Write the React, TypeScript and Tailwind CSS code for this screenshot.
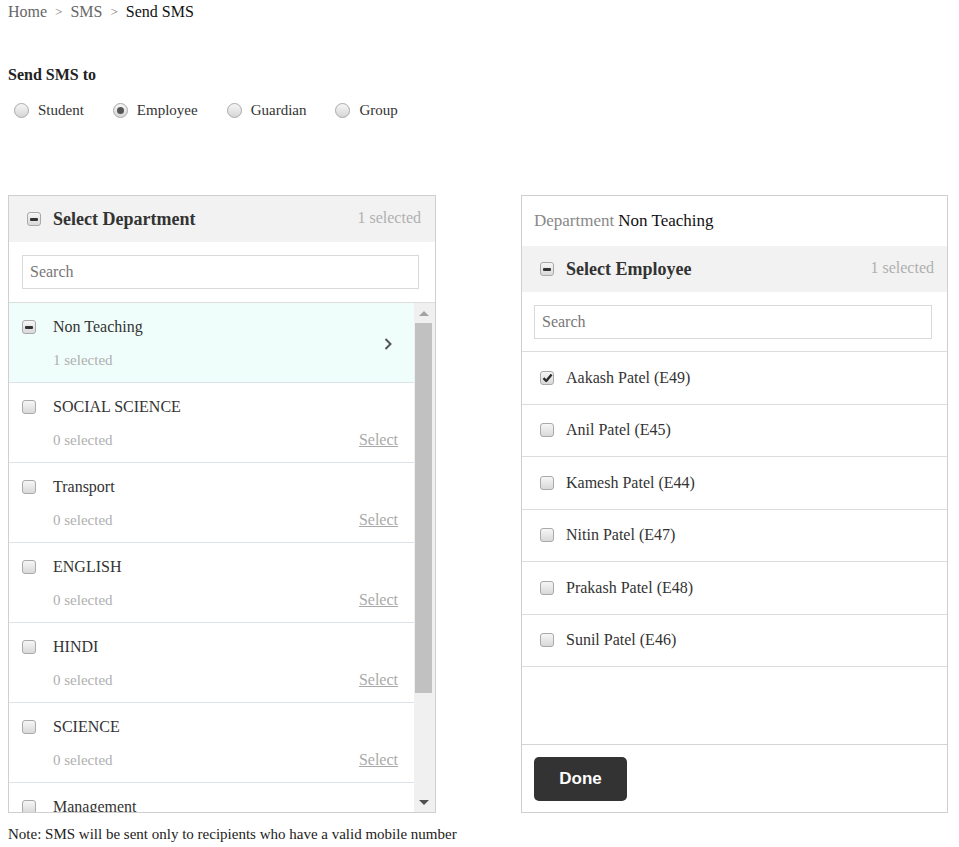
import React from 'react';

const departments = [
  { name: 'Non Teaching', count: 1, active: true },
  { name: 'SOCIAL SCIENCE', count: 0 },
  { name: 'Transport', count: 0 },
  { name: 'ENGLISH', count: 0 },
  { name: 'HINDI', count: 0 },
  { name: 'SCIENCE', count: 0 },
  { name: 'Management', count: 0 },
];

const employees = [
  { name: 'Aakash Patel (E49)', checked: true },
  { name: 'Anil Patel (E45)' },
  { name: 'Kamesh Patel (E44)' },
  { name: 'Nitin Patel (E47)' },
  { name: 'Prakash Patel (E48)' },
  { name: 'Sunil Patel (E46)' },
];

function Box({ mode }: { mode?: 'minus' | 'check' }) {
  return (
    <span className="flex h-[14px] w-[14px] shrink-0 items-center justify-center rounded-[3px] border border-[#a9a9a9] bg-linear-to-b from-[#f6f6f6] to-[#d9d9d9]">
      {mode === 'minus' && <span className="h-[3px] w-[8px] rounded-[1px] bg-[#333]" />}
      {mode === 'check' && (
        <svg width="11" height="10" viewBox="0 0 11 10">
          <path d="M1.5 5.2 L4.2 8 L9.6 1.6" fill="none" stroke="#2b2b2b" strokeWidth="2.4" strokeLinejoin="round" />
        </svg>
      )}
    </span>
  );
}

function Radio({ label, checked }: { label: string; checked?: boolean }) {
  return (
    <label className="flex items-center">
      <span className="mr-[9px] flex h-[15px] w-[15px] items-center justify-center rounded-full border border-[#a9a9a9] bg-linear-to-b from-[#f6f6f6] to-[#d6d6d6]">
        {checked && <span className="h-[7px] w-[7px] rounded-full bg-[#555]" />}
      </span>
      <span className="text-[#333]">{label}</span>
    </label>
  );
}

function SearchBox() {
  return (
    <input
      placeholder="Search"
      className="h-[34px] w-full border border-[#d9d9d9] px-[7px] text-[16px] text-[#333] placeholder:text-[#777] outline-none"
    />
  );
}

export default function App() {
  return (
    <div className="min-h-[847px] bg-white px-2 font-['Liberation_Serif',serif] text-[15px] text-[#333]">
      {/* breadcrumb */}
      <div className="flex h-6 items-center text-[16px] leading-6">
        <span className="text-[#666]">Home</span>
        <span className="mx-2 text-[13px] text-[#777]">&gt;</span>
        <span className="text-[#666]">SMS</span>
        <span className="mx-2 text-[13px] text-[#777]">&gt;</span>
        <span className="text-[#111]">Send SMS</span>
      </div>

      <div className="mt-[39px] h-6 text-[16px] font-bold leading-6 text-[#222]">Send SMS to</div>
      <div className="mt-[11px] flex h-6 items-center gap-[29px] pl-[6px]">
        <Radio label="Student" />
        <Radio label="Employee" checked />
        <Radio label="Guardian" />
        <Radio label="Group" />
      </div>

      <div className="mt-[73px] flex gap-[85px]">
        {/* departments */}
        <div className="flex h-[618px] w-[428px] flex-col border border-[#cfcfcf]">
          <div className="flex h-[46px] shrink-0 items-center bg-[#f2f2f2] pl-[18px] pr-[14px]">
            <Box mode="minus" />
            <span className="ml-[12px] text-[18px] font-bold text-[#333]">Select Department</span>
            <span className="ml-auto -mt-[2px] text-[16px] text-[#b0b0b0]">1 selected</span>
          </div>
          <div className="shrink-0 border-b border-[#ddd] pb-[13px] pl-[13px] pr-[16px] pt-[13px]">
            <SearchBox />
          </div>
          <div className="flex min-h-0 flex-1">
            <div className="min-w-0 flex-1 overflow-hidden">
              {departments.map((d) => (
                <div
                  key={d.name}
                  className={`flex items-center border-b border-[#dde3e6] pb-[10px] pl-[13px] pr-[16px] pt-3 ${d.active ? 'bg-[#effefb]' : ''}`}
                >
                  <div className="flex-1">
                    <div className="flex h-6 items-center">
                      <Box mode={d.active ? 'minus' : undefined} />
                      <span className="ml-[17px] text-[16px] text-[#333]">{d.name}</span>
                    </div>
                    <div className="mt-[9px] flex h-6 items-center pl-[31px] text-[15px] text-[#b0b0b0]">
                      <span>{d.count} selected</span>
                      {!d.active && <span className="ml-auto text-[16px] text-[#aaa] underline">Select</span>}
                    </div>
                  </div>
                  {d.active && (
                    <svg width="10" height="14" viewBox="0 0 10 14" className="mr-[5px]">
                      <path d="M2.5 2 L7.5 7 L2.5 12" fill="none" stroke="#555" strokeWidth="2" />
                    </svg>
                  )}
                </div>
              ))}
            </div>
            {/* scrollbar */}
            <div className="flex w-[21px] shrink-0 flex-col items-center bg-[#f0f0f0] pr-[2px]">
              <div className="flex h-[20px] items-center justify-center">
                <span className="h-0 w-0 border-x-[5px] border-b-[5px] border-x-transparent border-b-[#a3a3a3]" />
              </div>
              <div className="h-[370px] w-[17px] bg-[#c1c1c1]" />
              <div className="flex-1" />
              <div className="flex h-[20px] items-center justify-center">
                <span className="h-0 w-0 border-x-[5px] border-t-[5px] border-x-transparent border-t-[#505050]" />
              </div>
            </div>
          </div>
        </div>

        {/* employees */}
        <div className="flex h-[618px] w-[427px] flex-col border border-[#cfcfcf]">
          <div className="flex h-[50px] shrink-0 items-center px-[12px] text-[17px]">
            <span className="text-[#888]">Department</span>
            <span className="ml-[4px] text-[#111]">Non Teaching</span>
          </div>
          <div className="flex h-[46px] shrink-0 items-center bg-[#f2f2f2] pl-[18px] pr-[13px]">
            <Box mode="minus" />
            <span className="ml-[12px] text-[18px] font-bold text-[#333]">Select Employee</span>
            <span className="ml-auto -mt-[2px] text-[16px] text-[#b0b0b0]">1 selected</span>
          </div>
          <div className="shrink-0 border-b border-[#ddd] pb-[12px] pl-[12px] pr-[15px] pt-[13px]">
            <SearchBox />
          </div>
          <div className="flex-1">
            {employees.map((e) => (
              <div key={e.name} className="flex h-[52.5px] items-center border-b border-[#ddd] pl-[18px]">
                <Box mode={e.checked ? 'check' : undefined} />
                <span className="ml-[12px] text-[16px] text-[#333]">{e.name}</span>
              </div>
            ))}
          </div>
          <div className="shrink-0 border-t border-[#d4d4d4] px-[12px] pb-[11px] pt-[12px]">
            <button className="h-[44px] w-[93px] rounded-[5px] bg-[#333] font-['Liberation_Sans',sans-serif] text-[17px] font-bold text-white">
              Done
            </button>
          </div>
        </div>
      </div>

      <div className="mt-[9px] h-6 text-[15px] leading-6 text-[#222]">
        Note: SMS will be sent only to recipients who have a valid mobile number
      </div>
    </div>
  );
}
